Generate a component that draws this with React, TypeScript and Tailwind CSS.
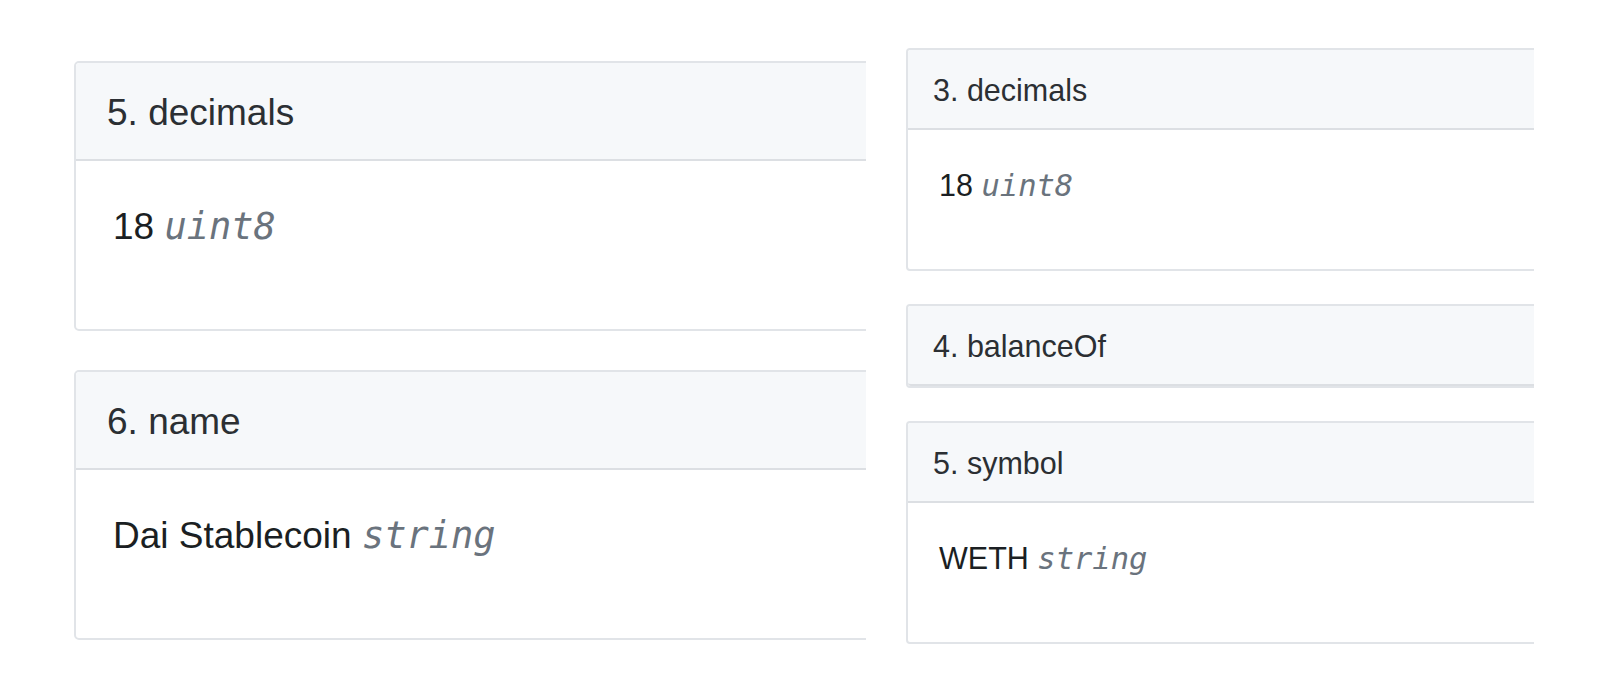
const sans = "font-['Liberation_Sans',Arial,sans-serif]";
const mono = "font-['DejaVu_Sans_Mono',monospace] italic text-[#6a737d]";

type Field = { title: string; value?: string; type?: string };

const left: Field[] = [
  { title: "5. decimals", value: "18", type: "uint8" },
  { title: "6. name", value: "Dai Stablecoin", type: "string" },
];

const right: Field[] = [
  { title: "3. decimals", value: "18", type: "uint8" },
  { title: "4. balanceOf" },
  { title: "5. symbol", value: "WETH", type: "string" },
];

function BigCard({ f }: { f: Field }) {
  return (
    <div className="w-[900px] rounded-[5px] border-2 border-[#e1e4e8] bg-white">
      <div className="h-[98px] rounded-t-[4px] border-b-2 border-[#dcdfe3] bg-[#f6f8fa] pl-[31px] pt-[31px]">
        <span className={`${sans} text-[37px] leading-none text-[#2b2f33]`}>{f.title}</span>
      </div>
      <div className="h-[168px] pl-[37px] pt-[47px] leading-none">
        <span className={`${sans} text-[37px] text-[#1b1f23]`}>{f.value} </span>
        <span className={`${mono} text-[37px]`}>{f.type}</span>
      </div>
    </div>
  );
}

function SmallCard({ f }: { f: Field }) {
  const body = f.value !== undefined;
  return (
    <div className="w-[700px] rounded-[4px] border-2 border-[#e1e4e8] bg-white">
      <div
        className={`h-[80px] border-b-2 border-[#dcdfe3] bg-[#f6f8fa] pl-[25px] pt-[25px] ${
          body ? "rounded-t-[3px]" : "rounded-[3px]"
        }`}
      >
        <span className={`${sans} text-[30.5px] leading-none text-[#2b2f33]`}>{f.title}</span>
      </div>
      {body && (
        <div className="h-[139px] pl-[31px] pt-[40px] leading-none">
          <span className={`${sans} text-[30.5px] text-[#1b1f23]`}>{f.value} </span>
          <span className={`${mono} text-[30.5px]`}>{f.type}</span>
        </div>
      )}
    </div>
  );
}

export default function App() {
  return (
    <div className="flex h-[686px] w-[1598px] gap-[40px] overflow-hidden bg-white pl-[74px]">
      <div className="flex w-[792px] flex-col gap-[39px] overflow-hidden pt-[61px]">
        {left.map((f) => (
          <BigCard key={f.title} f={f} />
        ))}
      </div>
      <div className="flex w-[628px] flex-col gap-[33px] overflow-hidden pt-[48px]">
        {right.map((f) => (
          <SmallCard key={f.title} f={f} />
        ))}
      </div>
    </div>
  );
}
